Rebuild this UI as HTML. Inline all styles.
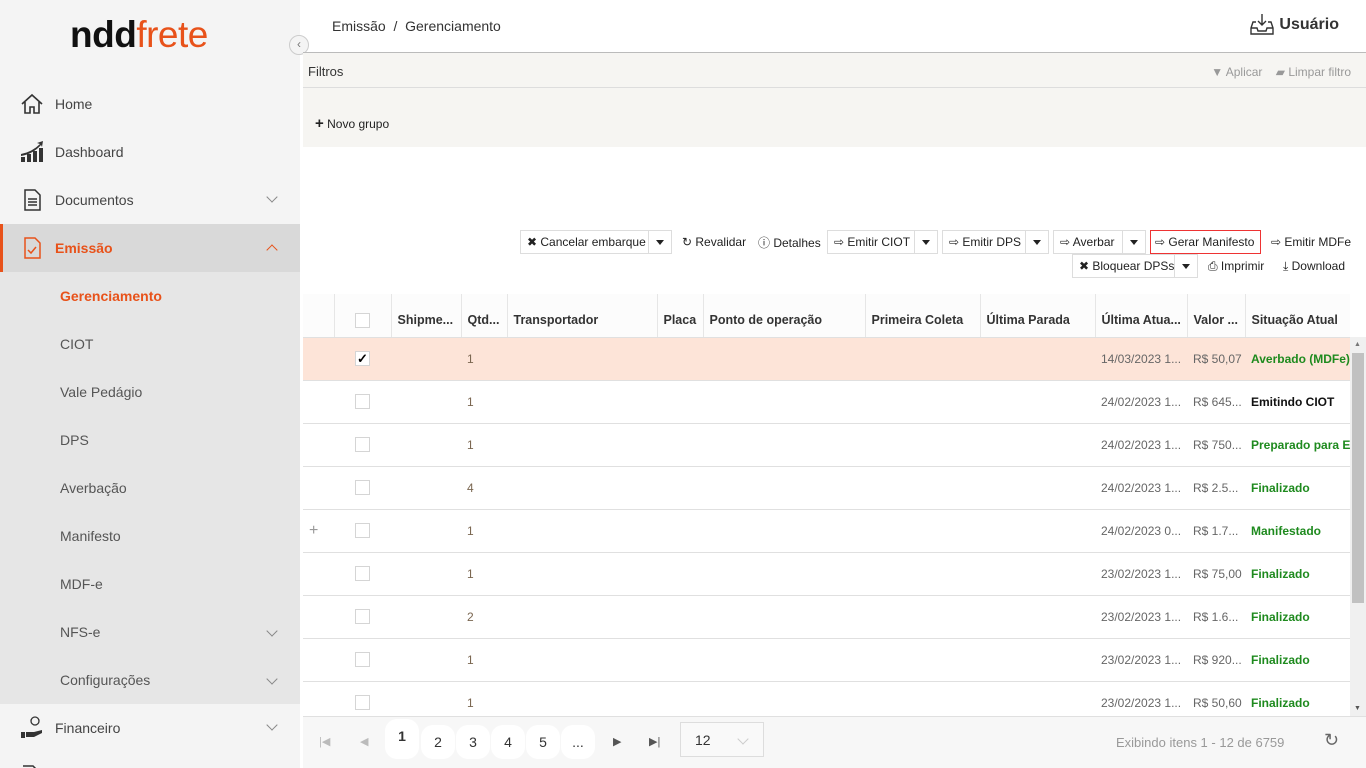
<!DOCTYPE html>
<html><head><meta charset="utf-8">
<style>
*{box-sizing:border-box;margin:0;padding:0}
html,body{width:1366px;height:768px;overflow:hidden}
body{font-family:"Liberation Sans",sans-serif;font-size:13px;color:#333;background:#fff;position:relative}
.side{position:absolute;left:0;top:0;width:300px;height:768px;background:#f4f4f4;overflow:hidden}
.logo{position:absolute;left:70px;top:14px;font-size:37px;letter-spacing:-0.5px}
.logo .a{color:#111;font-weight:bold}.logo .b{color:#e8521a}
.mi{position:absolute;left:0;width:300px;height:48px;font-size:14px;color:#444}
.mi .ic{position:absolute;left:20px;top:12px;width:24px;height:24px}
.mi .t{position:absolute;left:55px;top:16px}
.mi .ch{position:absolute;left:268px;top:17px;width:8px;height:8px;border-right:1.2px solid #888;border-bottom:1.2px solid #888;transform:rotate(45deg)}
.mi .up{transform:rotate(-135deg);top:22px;border-color:#e8521a}
.sub{position:absolute;left:0;top:272px;width:300px;height:432px;background:#e6e6e6}
.si{position:absolute;left:60px;font-size:14px;color:#555}
.bc{position:absolute;left:332px;top:18px;font-size:14px;color:#333}
.usr{position:absolute;right:27px;top:16px;font-size:16px;font-weight:bold;color:#333}
.filt{position:absolute;left:303px;top:52px;width:1063px;height:95px;background:#f6f5f2;border-top:1px solid #bbb}
.filt .h{height:35px;border-bottom:1px solid #ddd;font-size:13px;padding:11px 5px}
.tb{position:absolute;font-size:12px;color:#222;height:24px;display:flex;align-items:center;white-space:nowrap}
.btn{border:1px solid #ddd;background:#fff;padding:0 6px}
.dd{position:absolute;border-left:1px solid #ddd;width:23px;height:22px;right:0;top:0}
.dd:after{content:"";position:absolute;left:7px;top:9px;border:4px solid transparent;border-top:5px solid #222}
table{position:absolute;left:303px;top:294px;border-collapse:collapse;table-layout:fixed;width:1047px}
th{height:43px;text-align:left;font-size:12.5px;font-weight:bold;color:#333;padding:10px 0 0 6px;border-left:1px solid #e6e6e6;border-bottom:1px solid #e0e0e0;background:#fcfcfc;white-space:nowrap;overflow:hidden}
td{height:43px;padding-left:6px;border-bottom:1px solid #e0e0e0;font-size:12px;color:#666;white-space:nowrap;overflow:hidden}
tr.sel td{background:#fde4d8}
.cb{display:inline-block;width:15px;height:15px;border:1px solid #d5d5d5;background:#fff;margin-left:15px;vertical-align:middle;font-size:13px;line-height:13px;text-align:center;color:#000;font-weight:bold}
.q{color:#7a6650}
.g{color:#1e8a1e;font-weight:bold}
.k{color:#111;font-weight:bold}
.sb{position:absolute;left:1350px;top:337px;width:16px;height:379px;background:#f0f0f0}
.sb .th{position:absolute;left:2px;top:16px;width:12px;height:250px;background:#c1c1c1}
.pg{position:absolute;left:303px;top:716px;width:1063px;height:52px;background:#f7f7f7;border-top:1px solid #e0e0e0}
.pb{position:absolute;top:8px;width:34px;height:34px;border-radius:12px;background:#fff;text-align:center;line-height:34px;font-size:14px;color:#333}
</style></head><body>
<div class="side">
 <div class="logo"><span class="a">ndd</span><span class="b">frete</span></div>
 <div class="mi" style="top:80px"><svg class="ic" viewBox="0 0 24 24" fill="none" stroke="#333" stroke-width="1.6"><path d="M2 12L12 3l10 9M5 10v11h5v-6h4v6h5V10"/></svg><span class="t">Home</span></div>
 <div class="mi" style="top:128px"><svg class="ic" viewBox="0 0 24 24" fill="#333"><rect x="1" y="17" width="4" height="5"/><rect x="7" y="14" width="4" height="8"/><rect x="13" y="11" width="4" height="11"/><rect x="19" y="8" width="4" height="14"/><path d="M1 14Q12 12 20 4l-3-1 6-2-1 6-1-2Q13 14 1 16z"/></svg><span class="t">Dashboard</span></div>
 <div class="mi" style="top:176px"><svg class="ic" viewBox="0 0 24 24" fill="none" stroke="#333" stroke-width="1.5"><path d="M5 2h10l5 5v15H5zM8 11h9M8 14h9M8 17h9"/></svg><span class="t">Documentos</span><span class="ch"></span></div>
 <div class="mi" style="top:224px;background:#d9d9d9;border-left:3px solid #e8521a"><svg class="ic" viewBox="0 0 24 24" fill="none" stroke="#e8521a" stroke-width="1.5" style="left:17px"><path d="M5 2h10l5 5v15H5zM8 14l3 3 5-6"/></svg><span class="t" style="color:#e8521a;font-weight:bold;left:52px">Emissão</span><span class="ch up" style="left:265px"></span></div>
 <div class="sub">
  <div class="si" style="top:16px;color:#e8521a;font-weight:bold">Gerenciamento</div>
  <div class="si" style="top:64px">CIOT</div>
  <div class="si" style="top:112px">Vale Pedágio</div>
  <div class="si" style="top:160px">DPS</div>
  <div class="si" style="top:208px">Averbação</div>
  <div class="si" style="top:256px">Manifesto</div>
  <div class="si" style="top:304px">MDF-e</div>
  <div class="si" style="top:352px">NFS-e</div>
  <div class="si" style="top:400px">Configurações</div>
  <div class="mi" style="top:338px"><span class="ch"></span></div>
  <div class="mi" style="top:386px"><span class="ch"></span></div>
 </div>
 <div class="mi" style="top:704px"><svg class="ic" viewBox="0 0 24 24" fill="#333"><circle cx="15" cy="5" r="4" fill="none" stroke="#333" stroke-width="1.3"/><rect x="1" y="16" width="4" height="6"/><path d="M6 16h8l8-2v3l-8 4H6z"/></svg><span class="t">Financeiro</span><span class="ch"></span></div>
 <div class="mi" style="top:752px"><svg class="ic" viewBox="0 0 24 24" fill="none" stroke="#333" stroke-width="1.5"><path d="M3 2h10l5 5v15"/></svg></div>
</div>
<div style="position:absolute;left:289px;top:35px;width:20px;height:20px;border-radius:50%;border:1px solid #ccc;background:#f4f4f4;font-size:12px;text-align:center;line-height:17px;color:#777">‹</div>
<div class="bc">Emissão &nbsp;/&nbsp; Gerenciamento</div>
<svg style="position:absolute;left:1250px;top:13px" width="24" height="22" viewBox="0 0 24 22" fill="none" stroke="#333" stroke-width="1.4"><path d="M12 1v11M8 8l4 4 4-4M6 9H3L1 15v6h22v-6l-2-6h-3M1 15h6l1 3h8l1-3h6"/></svg>
<div class="usr">Usuário</div>
<div class="filt">
 <div class="h">Filtros<span style="position:absolute;right:15px;top:12px;color:#999;font-size:12px">▼ Aplicar &nbsp;&nbsp; ▰ Limpar filtro</span></div>
 <div style="padding:27px 12px;font-size:12px;color:#222"><b style="font-size:15px">+</b> Novo grupo</div>
</div>
<div class="tb btn" style="left:520px;top:230px;width:152px">✖ Cancelar embarque<span class="dd"></span></div>
<div class="tb" style="left:682px;top:230px">↻ Revalidar</div>
<div class="tb" style="left:758px;top:230px">ⓘ Detalhes</div>
<div class="tb btn" style="left:827px;top:230px;width:111px">⇨ Emitir CIOT<span class="dd"></span></div>
<div class="tb btn" style="left:942px;top:230px;width:107px">⇨ Emitir DPS<span class="dd"></span></div>
<div class="tb btn" style="left:1053px;top:230px;width:93px">⇨ Averbar<span class="dd"></span></div>
<div class="tb btn" style="left:1150px;top:230px;width:111px;border-color:#e33;padding:0 4px">⇨ Gerar Manifesto</div>
<div class="tb" style="left:1271px;top:230px">⇨ Emitir MDFe</div>
<div class="tb btn" style="left:1072px;top:254px;width:126px">✖ Bloquear DPSs<span class="dd"></span></div>
<div class="tb" style="left:1208px;top:254px">⎙ Imprimir</div>
<div class="tb" style="left:1283px;top:254px">⤓ Download</div>
<table>
<colgroup><col style="width:31px"><col style="width:57px"><col style="width:70px"><col style="width:46px"><col style="width:150px"><col style="width:46px"><col style="width:162px"><col style="width:115px"><col style="width:115px"><col style="width:92px"><col style="width:58px"><col style="width:105px"></colgroup>
<tr><th style="border-left:none"></th><th><span class="cb" style="margin-left:14px"></span></th><th>Shipme...</th><th>Qtd...</th><th>Transportador</th><th>Placa</th><th>Ponto de operação</th><th>Primeira Coleta</th><th>Última Parada</th><th>Última Atua...</th><th>Valor ...</th><th>Situação Atual</th></tr>
<tr class="sel"><td></td><td><span class="cb">✓</span></td><td></td><td class="q">1</td><td></td><td></td><td></td><td></td><td></td><td>14/03/2023 1...</td><td>R$ 50,07</td><td class="g">Averbado (MDFe)</td></tr>
<tr><td></td><td><span class="cb"></span></td><td></td><td class="q">1</td><td></td><td></td><td></td><td></td><td></td><td>24/02/2023 1...</td><td>R$ 645...</td><td class="k">Emitindo CIOT</td></tr>
<tr><td></td><td><span class="cb"></span></td><td></td><td class="q">1</td><td></td><td></td><td></td><td></td><td></td><td>24/02/2023 1...</td><td>R$ 750...</td><td class="g">Preparado para Em</td></tr>
<tr><td></td><td><span class="cb"></span></td><td></td><td class="q">4</td><td></td><td></td><td></td><td></td><td></td><td>24/02/2023 1...</td><td>R$ 2.5...</td><td class="g">Finalizado</td></tr>
<tr><td style="color:#999;font-size:16px">+</td><td><span class="cb"></span></td><td></td><td class="q">1</td><td></td><td></td><td></td><td></td><td></td><td>24/02/2023 0...</td><td>R$ 1.7...</td><td class="g">Manifestado</td></tr>
<tr><td></td><td><span class="cb"></span></td><td></td><td class="q">1</td><td></td><td></td><td></td><td></td><td></td><td>23/02/2023 1...</td><td>R$ 75,00</td><td class="g">Finalizado</td></tr>
<tr><td></td><td><span class="cb"></span></td><td></td><td class="q">2</td><td></td><td></td><td></td><td></td><td></td><td>23/02/2023 1...</td><td>R$ 1.6...</td><td class="g">Finalizado</td></tr>
<tr><td></td><td><span class="cb"></span></td><td></td><td class="q">1</td><td></td><td></td><td></td><td></td><td></td><td>23/02/2023 1...</td><td>R$ 920...</td><td class="g">Finalizado</td></tr>
<tr><td></td><td><span class="cb"></span></td><td></td><td class="q">1</td><td></td><td></td><td></td><td></td><td></td><td>23/02/2023 1...</td><td>R$ 50,60</td><td class="g">Finalizado</td></tr>
</table>
<div class="sb"><div class="th"></div><div style="position:absolute;left:4px;top:4px;font-size:7px;color:#777">▲</div><div style="position:absolute;left:4px;bottom:4px;font-size:7px;color:#555">▼</div></div>
<div class="pg">
 <span style="position:absolute;left:16px;top:18px;color:#bbb;font-size:11px">|◀</span>
 <span style="position:absolute;left:57px;top:18px;color:#bbb;font-size:11px">◀</span>
 <div class="pb" style="left:82px;top:2px;height:40px;font-weight:bold">1</div>
 <div class="pb" style="left:118px">2</div>
 <div class="pb" style="left:153px">3</div>
 <div class="pb" style="left:188px">4</div>
 <div class="pb" style="left:223px">5</div>
 <div class="pb" style="left:258px">...</div>
 <span style="position:absolute;left:310px;top:18px;color:#555;font-size:11px">▶</span>
 <span style="position:absolute;left:346px;top:18px;color:#555;font-size:11px">▶|</span>
 <div style="position:absolute;left:377px;top:5px;width:84px;height:35px;border:1px solid #ddd;background:#f9f9f9;font-size:14px;padding:9px 14px">12<span style="position:absolute;left:58px;top:12px;width:8px;height:8px;border-right:1.5px solid #ccc;border-bottom:1.5px solid #ccc;transform:rotate(45deg)"></span></div>
 <span style="position:absolute;left:813px;top:18px;color:#999;font-size:13px">Exibindo itens 1 - 12 de 6759</span>
 <span style="position:absolute;left:1021px;top:13px;color:#666;font-size:18px">↻</span>
</div>
</body></html>
